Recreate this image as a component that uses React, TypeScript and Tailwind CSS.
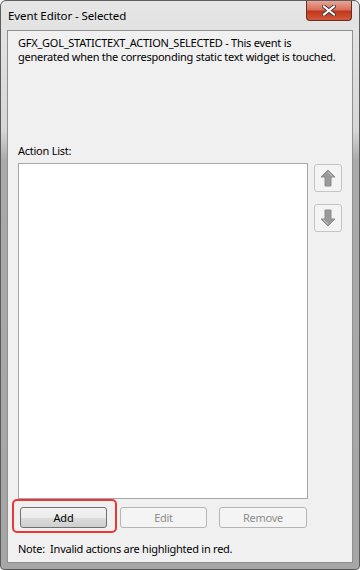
const font = { fontFamily: '"Noto Sans", "Open Sans", sans-serif' };

function ArrowButton({ down }: { down?: boolean }) {
  return (
    <div className="flex h-[28px] w-[28px] items-center justify-center rounded-[3px] border border-[#c6c6c6] bg-[#f4f4f4]">
      <svg width="16" height="18" viewBox="0 0 16 18" className={down ? "rotate-180" : ""}>
        <path d="M8 1 L15 8 L11 8 L11 17 L5 17 L5 8 L1 8 Z" fill="#9a9a9a" stroke="#8a8a8a" strokeWidth="1" />
        <path d="M8 3 L12.5 7.5" stroke="#c4c4c4" strokeWidth="1" />
      </svg>
    </div>
  );
}

export default function App() {
  return (
    <div className="h-[570px] w-[360px] bg-white" style={font}>
      <div className="flex h-[570px] w-[360px] flex-col rounded-t-[6px] rounded-b-[4px] border border-[#5c5c5c] bg-[linear-gradient(to_bottom,#e6e6e6_0px,#d6d6d6_130px,#a9a9a9_160px,#a6a6a6_100%)] px-[6px] pb-[6px]">
        <div className="flex h-[29px] shrink-0 items-start justify-between">
          <span className="pl-px pt-[7px] text-[11.5px] leading-[15px] tracking-[-0.1px] text-black">Event Editor - Selected</span>
          <div className="mr-px flex h-[20px] w-[46px] items-center justify-center rounded-b-[4px] border border-t-0 border-[#6b2a22] bg-[linear-gradient(to_bottom,#e8a597_0%,#d8705c_45%,#c2371d_55%,#d25a3c_100%)]">
            <svg width="14" height="11" viewBox="0 0 14 11">
              <path d="M2 1.5 L12 9.5 M12 1.5 L2 9.5" stroke="#4a3a38" strokeWidth="4" strokeLinecap="square" />
              <path d="M2 1.5 L12 9.5 M12 1.5 L2 9.5" stroke="#ffffff" strokeWidth="2" strokeLinecap="square" />
            </svg>
          </div>
        </div>
        <div className="flex flex-1 flex-col overflow-hidden border border-[#8f8f8f] bg-[#f0f0f0] pl-[10px] pr-[4px] text-[11px] tracking-[-0.25px] text-black">
          <p className="whitespace-nowrap pt-[5px] leading-[14px]">
            GFX_GOL_STATICTEXT_ACTION_SELECTED - This event is
            <br />
            generated when the corresponding static text widget is touched.
          </p>
          <div className="mt-[79px] leading-[15px]">Action List:</div>
          <div className="mt-[5px] flex gap-[6px]">
            <div className="h-[336px] w-[290px] border border-[#a7a7a7] bg-white" />
            <div className="mt-px flex flex-col gap-[12px]">
              <ArrowButton />
              <ArrowButton down />
            </div>
          </div>
          <div className="flex items-center">
            <div className="-ml-[6px] rounded-[5px] border-2 border-[#e8373b] pb-[3px] pl-[6px] pr-[8px] pt-[6px]">
              <button className="block h-[21px] w-[87px] rounded-[3px] border border-[#707070] bg-[linear-gradient(to_bottom,#f2f2f2_0%,#ebebeb_50%,#dddddd_51%,#cfcfcf_100%)] text-[11px] leading-none text-black">
                Add
              </button>
            </div>
            <button className="ml-[3px] mt-[2px] h-[21px] w-[87px] rounded-[3px] border border-[#b5b5b5] bg-[#f4f4f4] text-[11px] leading-none text-[#8d8d8d]">
              Edit
            </button>
            <button className="ml-[12px] mt-[2px] h-[21px] w-[88px] rounded-[3px] border border-[#b5b5b5] bg-[#f4f4f4] text-[11px] leading-none text-[#8d8d8d]">
              Remove
            </button>
          </div>
          <div className="mt-[8px] leading-[15px]">Note:&nbsp; Invalid actions are highlighted in red.</div>
        </div>
      </div>
    </div>
  );
}
